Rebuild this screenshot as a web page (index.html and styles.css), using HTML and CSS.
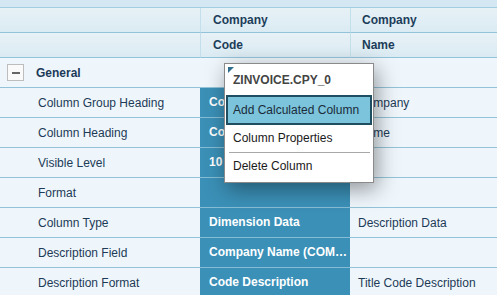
FILE: index.html
```html
<!DOCTYPE html>
<html lang="en">
<head>
  <meta charset="UTF-8" />
  <title>Column Properties</title>
  <link rel="stylesheet" href="styles.css">
</head>
<body>
  <div class="strip"></div>

  <div class="row head">
    <div class="cell"></div>
    <div class="cell col">Company</div>
    <div class="cell col last">Company</div>
  </div>
  <div class="row head">
    <div class="cell"></div>
    <div class="cell col">Code</div>
    <div class="cell col last">Name</div>
  </div>

  <div class="row">
    <div class="cell group"><span class="toggle"></span>General</div>
    <div class="cell"></div>
    <div class="cell"></div>
  </div>
  <div class="row">
    <div class="cell label">Column Group Heading</div>
    <div class="cell sel">Company</div>
    <div class="cell val">Company</div>
  </div>
  <div class="row">
    <div class="cell label">Column Heading</div>
    <div class="cell sel">Code</div>
    <div class="cell val">Name</div>
  </div>
  <div class="row">
    <div class="cell label">Visible Level</div>
    <div class="cell sel">10</div>
    <div class="cell val"></div>
  </div>
  <div class="row">
    <div class="cell label">Format</div>
    <div class="cell sel"></div>
    <div class="cell val"></div>
  </div>
  <div class="row">
    <div class="cell label">Column Type</div>
    <div class="cell sel">Dimension Data</div>
    <div class="cell val">Description Data</div>
  </div>
  <div class="row">
    <div class="cell label">Description Field</div>
    <div class="cell sel">Company Name (COMPANY_NAME)</div>
    <div class="cell val"></div>
  </div>
  <div class="row">
    <div class="cell label">Description Format</div>
    <div class="cell sel">Code Description</div>
    <div class="cell val">Title Code Description</div>
  </div>

  <div class="menu">
    <div class="menu-title">ZINVOICE.CPY_0</div>
    <div class="menu-item active">Add Calculated Column</div>
    <div class="menu-item">Column Properties</div>
    <div class="menu-sep"></div>
    <div class="menu-item">Delete Column</div>
  </div>
</body>
</html>
```
FILE: styles.css
```css
body {
  margin: 0;
  font-family: "Liberation Sans", Arial, sans-serif;
  font-size: 12px;
  color: #1d3a56;
  background: #eef6fc;
  overflow: hidden;
}
.strip {
  height: 7px;
  background: #d4e8f3;
  border-bottom: 1px solid #a3cde0;
}
.row {
  display: grid;
  grid-template-columns: 200px 150px 1fr;
  height: 30px;
}
.cell {
  display: flex;
  align-items: center;
  border-bottom: 1px solid #93c3d8;
  white-space: nowrap;
  overflow: hidden;
}
.head { height: 25px; }
.head .cell {
  background: linear-gradient(#e7f1f6, #dbebf3);
  font-weight: bold;
  color: #1c3d5a;
}
.head .col {
  padding-left: 12px;
  border-left: 1px solid #c4dfec;
}
.head .col.last { padding-left: 11px; }

.group { font-weight: bold; color: #1c3a58; padding-left: 7px; }
.toggle {
  width: 15px;
  height: 15px;
  border: 1px solid #bdbdbd;
  background: #fafafa;
  margin-right: 12px;
  position: relative;
}
.toggle::after {
  content: '';
  position: absolute;
  left: 4px;
  top: 7px;
  width: 8px;
  height: 2px;
  background: #666;
}
.label { padding-left: 38px; }
.sel {
  background: #3b90b7;
  color: #fff;
  font-weight: bold;
  padding-left: 9px;
  padding-right: 2px;
  border-bottom-color: #86bcd5;
  display: block;
  line-height: 29px;
  text-overflow: ellipsis;
}
.val { padding-left: 8px; }

.menu {
  position: absolute;
  left: 224px;
  top: 63px;
  width: 148px;
  height: 118px;
  background: #fff;
  border: 1px solid #8a8a8a;
  box-shadow: 3px 6px 20px rgba(0, 0, 0, 0.4);
  color: #1a1a1a;
  font-size: 12px;
}
.menu::before {
  content: '';
  position: absolute;
  left: 3px;
  top: 3px;
  border-top: 6px solid #2e6e8c;
  border-right: 6px solid transparent;
}
.menu-title {
  height: 31px;
  line-height: 32px;
  padding-left: 8px;
  font-weight: bold;
  color: #444;
}
.menu-item {
  height: 24px;
  line-height: 24px;
  padding-left: 8px;
}
.menu-item.active {
  height: 26px;
  line-height: 26px;
  margin: 0 1px 1px;
  padding-left: 5px;
  background: #7cc3dc;
  border: 2px solid #1f4e61;
  color: #1a2c3a;
}
.menu-sep {
  height: 1px;
  margin: 2px 3px 1px 4px;
  background: #a8a8a8;
}
```
